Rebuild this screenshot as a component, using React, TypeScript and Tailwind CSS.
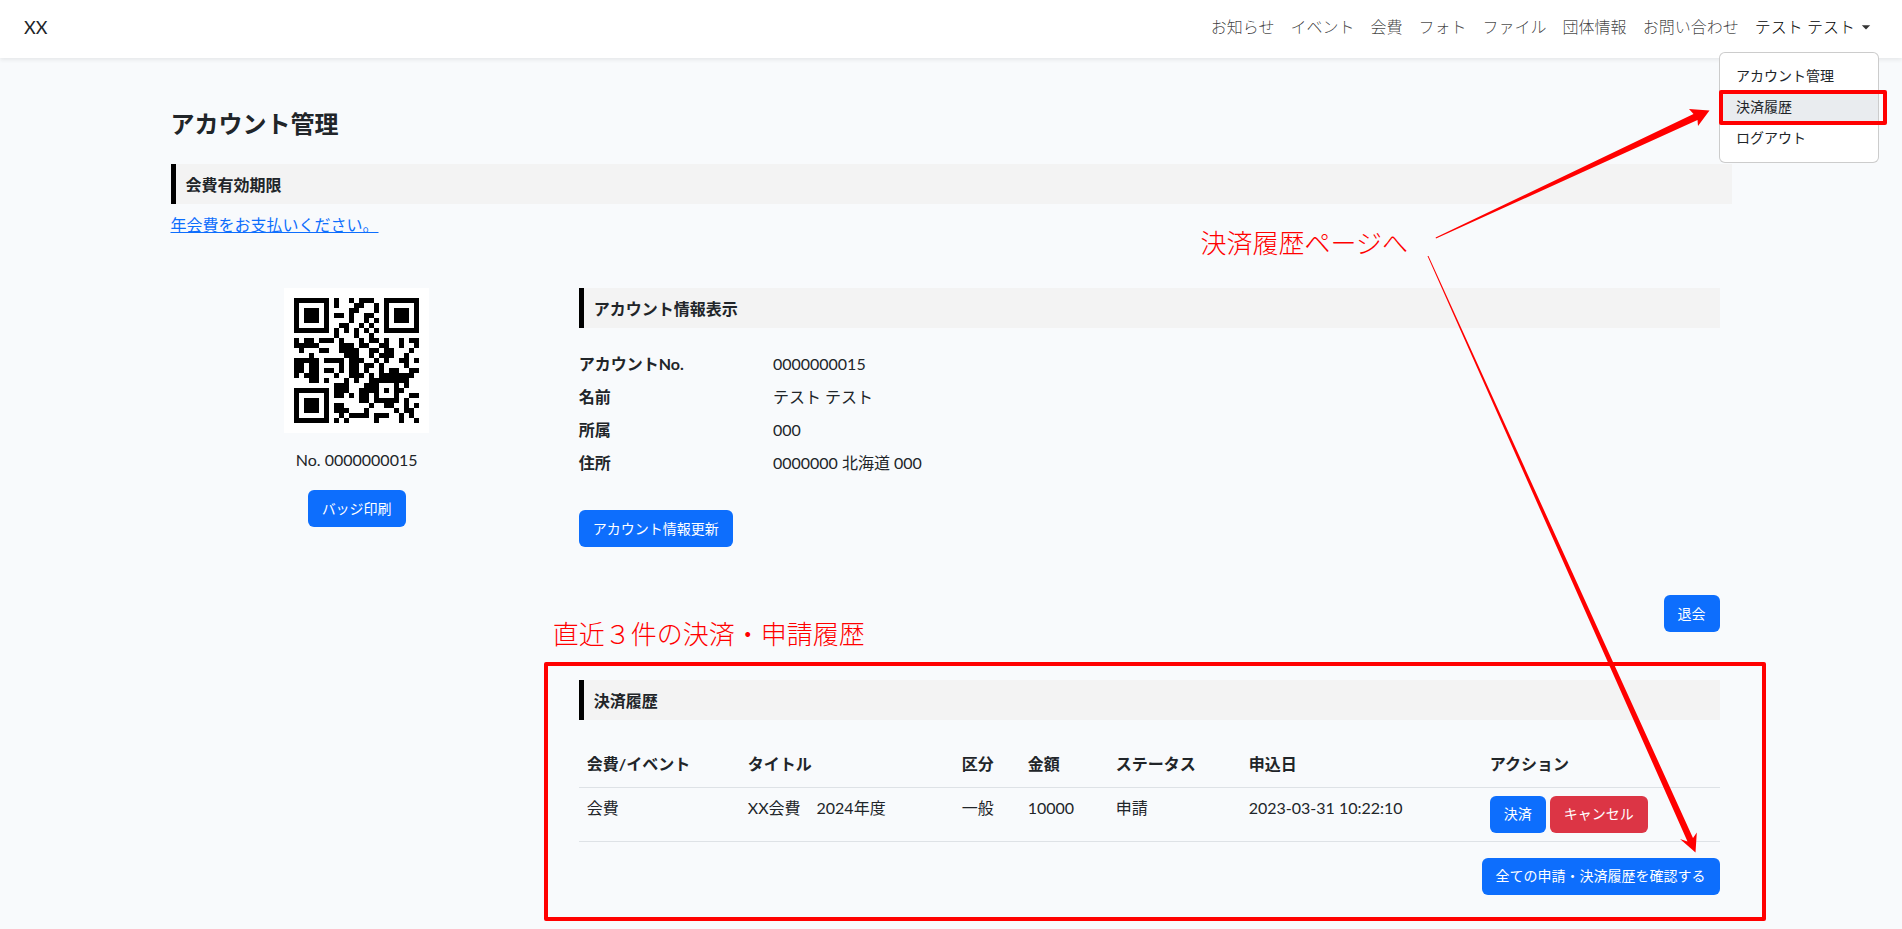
import React from 'react';
import { clsx } from 'clsx';

const navLinks = ['お知らせ', 'イベント', '会費', 'フォト', 'ファイル', '団体情報', 'お問い合わせ'];

const accountRows = [
  { label: 'アカウントNo.', value: '0000000015' },
  { label: '名前', value: 'テスト テスト' },
  { label: '所属', value: '000' },
  { label: '住所', value: '0000000 北海道 000' },
];

const payments = [
  {
    kind: '会費',
    title: 'XX会費　2024年度',
    category: '一般',
    amount: '10000',
    status: '申請',
    date: '2023-03-31 10:22:10',
  },
];

const qrRows = [
  '#######.#..#.###..#######',
  '#.....#.#...##..#.#.....#',
  '#.###.#....##...#.#.###.#',
  '#.###.#.##.#..##..#.###.#',
  '#.###.#....#..#.#.#.###.#',
  '#.....#..##..#.#..#.....#',
  '#######.#.#.#.#.#.#######',
  '........#...#..#.........',
  '#.##.###.#...#.##.#..#.##',
  '#####....###.##..##..#..#',
  '.#...##..####..##.##...#.',
  '...#......###..#.###..#..',
  '#####.####.###..#.#..##.#',
  '##.##....#.##.##.#....#..',
  '##.##.##.#.##.#..#.##..##',
  '#.###...#..###.#.#######.',
  '...##.#...#.#..########..',
  '........###...###...#.#..',
  '#######.###..####.#.##...',
  '#.....#.##.#.##.#...#..##',
  '#.###.#......##.#####.#..',
  '#.###.#.##.....#..##..#.#',
  '#.###.#.###...#.....#.##.',
  '#.....#..#.####.###..#.#.',
  '#######.#.#.....#....#..#',
];

const QrCode = () => (
  <svg
    viewBox="-2 -2 29 29"
    className="w-[145px] h-[145px] bg-white"
    shapeRendering="crispEdges"
    role="img"
    aria-label="QR"
  >
    {qrRows.map((row, y) =>
      row.split('').map((cell, x) =>
        cell === '#' ? <rect key={`${x}-${y}`} x={x} y={y} width={1} height={1} /> : null
      )
    )}
  </svg>
);

const Button = ({ children, danger }: { children: React.ReactNode; danger?: boolean }) => (
  <button
    type="button"
    className={clsx(
      'h-[37px] px-[14px] rounded-md text-sm text-white whitespace-nowrap',
      danger ? 'bg-[#dc3545]' : 'bg-[#0d6efd]'
    )}
  >
    {children}
  </button>
);

const SectionTitle = ({ children }: { children: React.ReactNode }) => (
  <h2 className="h-10 flex items-center border-l-[5px] border-black bg-[#f3f3f3] pt-[2px] pl-[10px] font-bold">
    {children}
  </h2>
);

const Header = () => (
  <header className="relative z-10 flex h-[58px] items-center justify-between bg-white pl-6 pr-[31px] pb-1 shadow-[0_2px_4px_rgba(0,0,0,0.075)]">
    <a href="#" className="text-lg">XX</a>
    <nav className="flex items-center gap-4">
      {navLinks.map((label) => (
        <a key={label} href="#" className="font-light text-black/75">{label}</a>
      ))}
      <div className="relative">
        <button type="button" className="flex items-center gap-[6px] font-light text-black">
          テスト テスト
          <svg viewBox="0 0 10 5" className="w-[10px] h-[5px]" fill="#333">
            <path d="M0.8 0.3h8.4L5 4.6z" />
          </svg>
        </button>
        <div className="absolute -right-[8px] top-[37px] w-40 rounded-md border border-black/20 bg-white pt-[7px] pb-[9px] text-sm">
          <a href="#" className="block h-[31px] px-4 leading-[31px]">アカウント管理</a>
          <a href="#" className="relative block h-[31px] bg-[#e9ecef] px-4 leading-[31px]">
            決済履歴
            <span className="absolute -top-px -bottom-[3px] -left-px -right-[9px] rounded-xs border-4 border-[#f00]" />
          </a>
          <a href="#" className="block h-[31px] px-4 leading-[31px]">ログアウト</a>
        </div>
      </div>
    </nav>
  </header>
);

const Arrows = () => (
  <svg
    viewBox="1420 100 300 760"
    className="pointer-events-none absolute right-[182px] top-[100px] z-20 w-[300px] h-[760px]"
    fill="#f00"
  >
    <path d="M1435.6 237.6L1693.5 114L1689 109L1709.5 110.5L1698 126L1697.5 120L1436 238.6z" />
    <path d="M1427.5 256L1687.5 841.5L1680 839L1695.5 852.5L1696.8 832.5L1693 838L1428.5 256z" />
  </svg>
);

const PaymentTable = () => (
  <table className="mt-6 w-full table-fixed text-left leading-6">
    <colgroup>
      <col className="w-[161px]" />
      <col className="w-[214px]" />
      <col className="w-[66px]" />
      <col className="w-[88px]" />
      <col className="w-[133px]" />
      <col className="w-[241px]" />
      <col className="w-[238px]" />
    </colgroup>
    <thead>
      <tr className="h-[43px] border-b border-[#dee2e6]">
        <th className="px-2 pb-[2px]">会費/イベント</th>
        <th className="px-2 pb-[2px]">タイトル</th>
        <th className="px-2 pb-[2px]">区分</th>
        <th className="px-2 pb-[2px]">金額</th>
        <th className="px-2 pb-[2px]">ステータス</th>
        <th className="px-2 pb-[2px]">申込日</th>
        <th className="px-2 pb-[2px]">アクション</th>
      </tr>
    </thead>
    <tbody>
      {payments.map((p) => (
        <tr key={p.date} className="border-b border-[#dee2e6] align-top">
          <td className="p-2">{p.kind}</td>
          <td className="p-2">{p.title}</td>
          <td className="p-2">{p.category}</td>
          <td className="p-2">{p.amount}</td>
          <td className="p-2">{p.status}</td>
          <td className="p-2">{p.date}</td>
          <td className="p-2">
            <div className="flex gap-1">
              <Button>決済</Button>
              <Button danger>キャンセル</Button>
            </div>
          </td>
        </tr>
      ))}
    </tbody>
  </table>
);

export default function App() {
  return (
    <div
      lang="ja"
      className="relative min-h-screen overflow-hidden bg-[#f8fafc] text-base text-[#212529] font-['Lato','Noto_Sans_CJK_JP',sans-serif]"
    >
      <Header />
      <Arrows />
      <p className="absolute right-[494px] top-[223px] text-[26px] leading-10 font-light text-[#f00]">
        決済履歴ページへ
      </p>

      <main className="mx-auto w-10/12 px-3 pt-[51px]">
        <h1 className="text-2xl leading-[29px] font-bold mb-[26px]">アカウント管理</h1>
        <SectionTitle>会費有効期限</SectionTitle>
        <a href="#" className="mt-2 inline-block leading-[26px] text-[#0d6efd] underline">
          年会費をお支払いください。
        </a>

        <div className="-mx-3 mt-[50px] flex">
          <div className="flex w-3/12 flex-col items-center">
            <QrCode />
            <p className="mt-[14px] mb-[17px] leading-[26px]">No. 0000000015</p>
            <Button>バッジ印刷</Button>
          </div>

          <div className="w-9/12 px-6">
            <SectionTitle>アカウント情報表示</SectionTitle>
            <dl className="-mr-6 mt-[19px] mb-[31px]">
              {accountRows.map((row) => (
                <div key={row.label} className="flex leading-[33px]">
                  <dt className="w-2/12 font-bold">{row.label}</dt>
                  <dd>{row.value}</dd>
                </div>
              ))}
            </dl>
            <Button>アカウント情報更新</Button>
            <div className="mt-12 flex justify-end">
              <Button>退会</Button>
            </div>

            <section className="relative mt-12">
              <div className="pointer-events-none absolute -top-[18px] -bottom-[26px] -left-[35px] -right-[46px] rounded-xs border-4 border-[#f00]" />
              <p className="absolute -top-[66px] -left-[26px] text-[26px] leading-10 font-light text-[#f00]">
                直近３件の決済・申請履歴
              </p>
              <SectionTitle>決済履歴</SectionTitle>
              <PaymentTable />
              <div className="mt-4 flex justify-end">
                <Button>全ての申請・決済履歴を確認する</Button>
              </div>
            </section>
          </div>
        </div>
      </main>
    </div>
  );
}
